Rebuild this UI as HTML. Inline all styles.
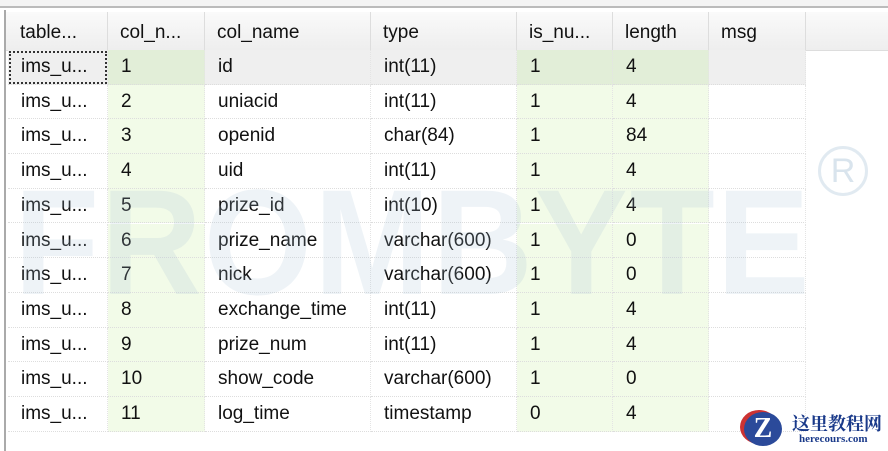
<!DOCTYPE html><html><head><style>
body{margin:0;width:888px;height:451px;background:#fff;position:relative;overflow:hidden;font-family:"Liberation Sans",sans-serif;font-size:19px;color:#111}
.top{position:absolute;left:0;top:0;width:888px;height:6px;border-bottom:2px solid #bbb;background:#f4f4f4}
.lb{position:absolute;left:4px;top:10px;width:2px;height:441px;background:#aaa}
.hdr{position:absolute;left:6px;top:12px;width:882px;height:38px;background:linear-gradient(#fafafa,#eee);border-bottom:1px solid #ddd}
.c{position:absolute;height:34.7px;line-height:34px;box-sizing:border-box;padding-left:13px;white-space:nowrap;border-bottom:1px dotted #ddd;border-right:1px dotted #e4e4e4}
.h{position:absolute;top:12px;height:38px;line-height:42px;padding-left:12px;box-sizing:border-box;border-right:1px solid #ddd}
.wm{position:absolute;left:14px;top:172px;font-size:150px;font-weight:bold;color:rgba(170,195,215,0.2);letter-spacing:2px;transform:scaleX(0.93);transform-origin:left;line-height:140px;font-family:"Liberation Sans",sans-serif}
</style></head><body>
<div class="top"></div><div class="lb"></div>
<div class="hdr"></div>
<div class="h" style="left:8px;width:100px">table...</div>
<div class="h" style="left:108px;width:97px">col_n...</div>
<div class="h" style="left:205px;width:166px">col_name</div>
<div class="h" style="left:371px;width:146px">type</div>
<div class="h" style="left:517px;width:96px">is_nu...</div>
<div class="h" style="left:613px;width:96px">length</div>
<div class="h" style="left:709px;width:97px">msg</div>
<div id="rows"></div>
<div class="wm">FROMBYTE</div>
<div style="position:absolute;left:818px;top:146px;width:44px;height:44px;border:3px solid rgba(170,195,215,0.35);border-radius:50%;color:rgba(170,195,215,0.45);font-size:34px;line-height:44px;text-align:center">R</div>
<div style="position:absolute;left:744px;top:412px;width:38px;height:34px;border-radius:50%;background:#2b4a9a;color:#fff;font-weight:bold;font-size:28px;text-align:center;line-height:34px;font-family:'Liberation Serif',serif;box-shadow:-4px -2px 0 #c33">Z</div>
<div style="position:absolute;left:792px;top:410px;font-family:'Liberation Serif','Noto Serif CJK SC',serif;font-weight:bold;color:#1a3a8a;font-size:18px">这里教程网</div>
<div style="position:absolute;left:799px;top:433px;font-family:'Liberation Serif',serif;font-weight:bold;color:#1a3a8a;font-size:11px">herecours.com</div>
<script>
var d=[["1","id","int(11)","1","4"],["2","uniacid","int(11)","1","4"],["3","openid","char(84)","1","84"],["4","uid","int(11)","1","4"],["5","prize_id","int(10)","1","4"],["6","prize_name","varchar(600)","1","0"],["7","nick","varchar(600)","1","0"],["8","exchange_time","int(11)","1","4"],["9","prize_num","int(11)","1","4"],["10","show_code","varchar(600)","1","0"],["11","log_time","timestamp","0","4"]];
var L=[8,108,205,371,517,613,709],W=[100,97,166,146,96,96,97],h="";
d.forEach(function(r,i){var y=50+i*34.7;var v=["ims_u..."].concat(r).concat([""]);
v.forEach(function(t,j){var gr=(j==1||j==4||j==5);var bg=i==0?(gr?"#e2eed8":"#efefef"):(gr?"#f2fbe8":"#fff");
var ex=(i==0&&j==0)?"outline:2px dotted #333;outline-offset:-3px;":"";
h+='<div class="c" style="left:'+L[j]+'px;top:'+y+'px;width:'+W[j]+'px;background:'+bg+';'+ex+'">'+t+'</div>';});});
document.getElementById("rows").innerHTML=h;
</script>
</body></html>
